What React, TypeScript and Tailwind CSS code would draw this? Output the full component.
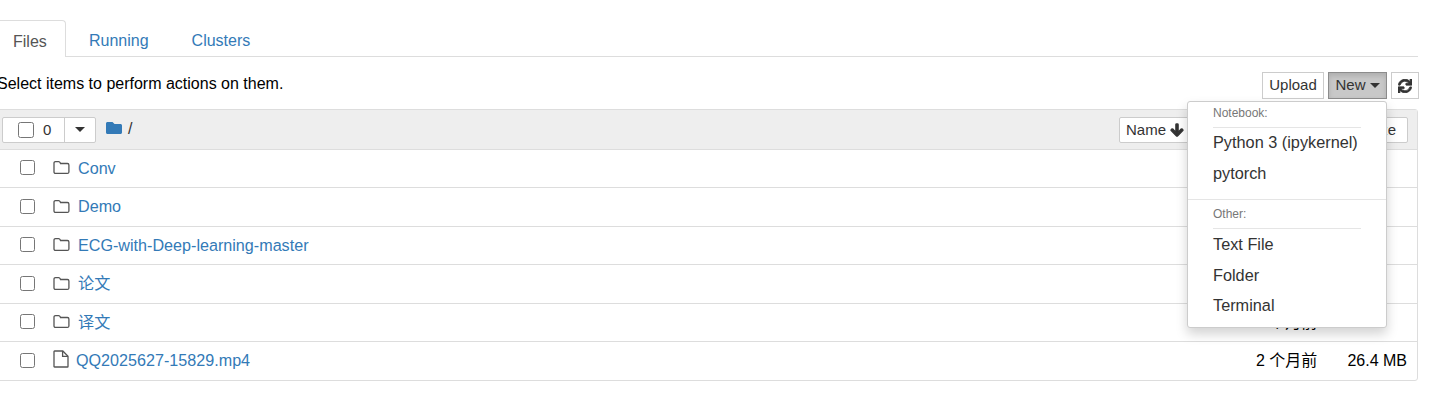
import { FaArrowDown, FaFolder, FaSync } from 'react-icons/fa';

const rows = [
    { name: 'Conv', kind: 'folder' },
    { name: 'Demo', kind: 'folder' },
    { name: 'ECG-with-Deep-learning-master', kind: 'folder' },
    { name: '论文', kind: 'folder' },
    { name: '译文', kind: 'folder' },
    { name: 'QQ2025627-15829.mp4', kind: 'file', size: '26.4 MB' },
];

function FolderOutline() {
    return (
        <svg width="17" height="15" viewBox="0 0 17 15" fill="none" stroke="#555" strokeWidth="1.3" className="shrink-0">
            <path d="M2.5 1.6h3.2c.9 0 1.2.5 1.5 1.2l.3.7h6.9c.9 0 1.5.6 1.5 1.5v6.9c0 .9-.6 1.5-1.5 1.5H2.5c-.9 0-1.5-.6-1.5-1.5V3.1c0-.9.6-1.5 1.5-1.5z" />
        </svg>
    );
}

function FileOutline() {
    return (
        <svg width="16" height="18" viewBox="0 0 16 18" fill="none" stroke="#555" strokeWidth="1.3" className="shrink-0">
            <path d="M1 1.6c0-.4.2-.6.6-.6h8.2L15 6.2v10.2c0 .4-.2.6-.6.6H1.6c-.4 0-.6-.2-.6-.6z" />
            <path d="M9.6 1v5.4H15" />
        </svg>
    );
}

function Caret({ color = 'border-t-[#333]' }: { color?: string }) {
    return <span className={`inline-block w-0 h-0 border-x-[5px] border-x-transparent border-t-[5px] ${color}`}></span>;
}

function FileRow({ name, kind, size }: { name: string, kind: string, size?: string }) {
    return (
        <div className="h-[38.5px] last:h-[37.5px] border-b last:border-b-0 border-[#ddd] flex items-center text-black">
            <input type="checkbox" readOnly className="w-[15px] h-[15px] ml-[25px] -mt-[2px] shrink-0" />
            {kind === 'folder' ? (
                <div className="ml-[18px] w-[25px] shrink-0 -mt-[2px]"><FolderOutline /></div>
            ) : (
                <div className="ml-[18px] w-[23px] shrink-0 -mt-[4px]"><FileOutline /></div>
            )}
            <a className="text-[#337ab7] flex-1 text-[16.15px] -mt-[2px]">{name}</a>
            <span className="w-[63px]">2 个月前</span>
            <span className="w-[98px] pr-[10px] text-right">{size ?? ''}</span>
        </div>
    );
}

function NewMenu() {
    return (
        <div className="absolute top-[101px] left-[1187px] w-[200px] h-[227px] bg-white border border-[#ccc] rounded-[3px] shadow-[0_6px_12px_rgba(0,0,0,0.175)] text-[#333] text-[16.3px] z-10">
            <div className="px-[25px] text-[12px] h-[25px] leading-[22px] text-[#777]">Notebook:</div>
            <div className="mx-[25px] border-t border-[#e5e5e5]"></div>
            <div className="px-[25px] h-[31px] leading-[29px]">Python 3 (ipykernel)</div>
            <div className="px-[25px] h-[31px] leading-[29px]">pytorch</div>
            <div className="border-t border-[#e5e5e5] mt-[9px]"></div>
            <div className="px-[25px] text-[12px] h-[28px] leading-[28px] text-[#777]">Other:</div>
            <div className="mx-[25px] border-t border-[#e5e5e5]"></div>
            <div className="px-[25px] h-[31px] leading-[31px]">Text File</div>
            <div className="px-[25px] h-[31px] leading-[31px]">Folder</div>
            <div className="px-[25px] h-[30px] leading-[29px]">Terminal</div>
        </div>
    );
}

export default function App() {
    return (
        <div className="relative w-[1440px] h-[408px] overflow-hidden bg-white text-[16px] font-['Liberation_Sans','Noto_Sans_CJK_SC',sans-serif]">
            <div className="w-[1424px] -ml-[6px] pt-[20px]">
                <div className="flex h-[37px] border-b border-[#ddd]">
                    <div className="h-[37px] w-[72px] pl-[18px] leading-[41px] bg-white border border-b-0 border-[#ddd] rounded-t-[4px] text-[#555]">Files</div>
                    <div className="ml-[23px] leading-[41px] text-[#337ab7]">Running</div>
                    <div className="ml-[43px] leading-[41px] text-[#337ab7]">Clusters</div>
                </div>
                <div className="flex justify-between h-[52px] pt-[15px]">
                    <span className="ml-[3px] leading-[24px] text-black">Select items to perform actions on them.</span>
                    <div className="flex gap-[4px] h-[27px] -mr-[1px] text-[#333] text-[15px]">
                        <div className="w-[62px] border border-[#ccc] flex items-center justify-center">Upload</div>
                        <div className="w-[59px] border border-[#8c8c8c] bg-[#c8c8c8] shadow-[inset_0_3px_5px_rgba(0,0,0,0.125)] flex items-center justify-center gap-[4px]">New <Caret /></div>
                        <div className="w-[28px] border border-[#ccc] flex items-center justify-center"><FaSync size={14} stroke="currentColor" strokeWidth={30} /></div>
                    </div>
                </div>
                <div className="border border-[#ddd] rounded-[3px]">
                    <div className="h-[39.9px] bg-[#eee] border-b border-[#ddd] flex items-center text-[#333] text-[15px]">
                        <div className="flex h-[26px] mt-[1px] ml-[7px] bg-white border border-[#ccc] rounded-[2px] w-[94px]">
                            <div className="w-[62px] border-r border-[#ccc] flex items-center pl-[15px] gap-[9px]">
                                <input type="checkbox" readOnly className="w-[16px] h-[16px] m-0 shrink-0" />
                                <span>0</span>
                            </div>
                            <div className="flex-1 flex items-center justify-center"><Caret /></div>
                        </div>
                        <FaFolder size={16} color="#337ab7" className="ml-[10px] -mt-[3px]" />
                        <span className="ml-[6px] text-[16px]">/</span>
                        <div className="ml-auto mr-[9px] mt-[1px] flex h-[26px] bg-white border border-[#ccc] rounded-[2px] w-[289px]">
                            <div className="flex items-center gap-[4px] pl-[6px]">Name <FaArrowDown size={14} stroke="currentColor" strokeWidth={50} /></div>
                            <div className="ml-auto pr-[11px] flex items-center">Size</div>
                        </div>
                    </div>
                    {rows.map((row) => (
                        <FileRow key={row.name} name={row.name} kind={row.kind} size={row.size} />
                    ))}
                </div>
            </div>
            <NewMenu />
        </div>
    );
}
